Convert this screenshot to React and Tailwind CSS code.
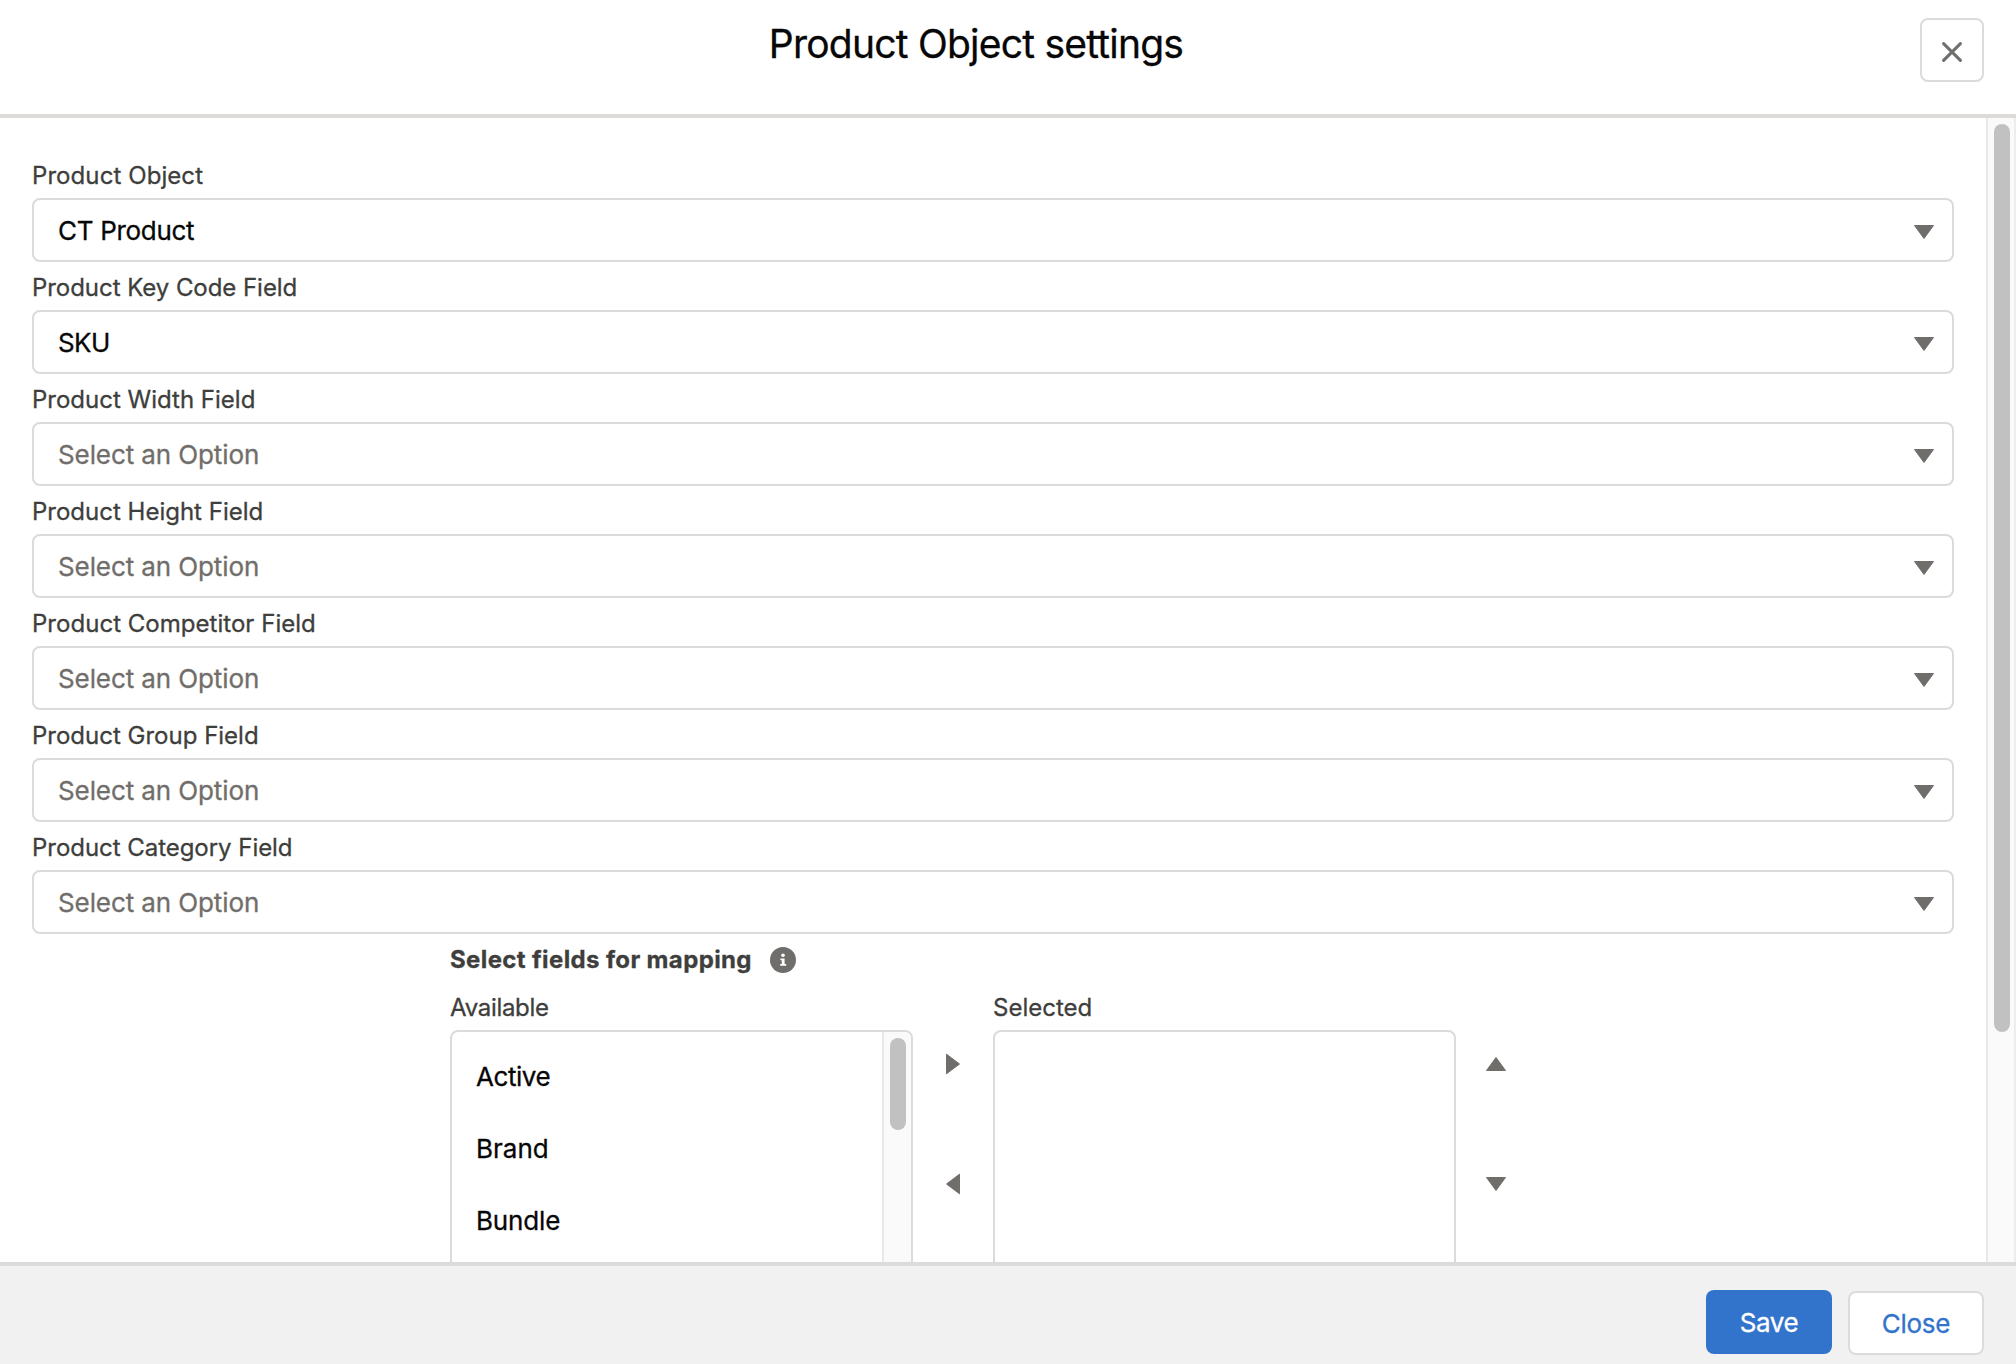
const fields = [
  { label: "Product Object", labelTracking: "tracking-[0.08px]", value: "CT Product", tracking: "tracking-[-0.3px]" },
  { label: "Product Key Code Field", labelTracking: "tracking-[-0.05px]", value: "SKU", tracking: "tracking-[-0.6px]" },
  { label: "Product Width Field", labelTracking: "tracking-[0px]" },
  { label: "Product Height Field", labelTracking: "tracking-[0px]" },
  { label: "Product Competitor Field", labelTracking: "tracking-[0.03px]" },
  { label: "Product Group Field", labelTracking: "tracking-[0px]" },
  { label: "Product Category Field", labelTracking: "tracking-[-0.04px]" },
];

const options = [
  { name: "Active", tracking: "tracking-[-0.45px]" },
  { name: "Brand", tracking: "tracking-[0px]" },
  { name: "Bundle", tracking: "tracking-[-0.15px]" },
];

const arrows = {
  down: { w: 20, h: 14, d: "M0.5 0.5H19.5L10 13.5Z" },
  up: { w: 20, h: 14, d: "M0.5 13.5H19.5L10 0.5Z" },
  right: { w: 14, h: 22, d: "M0.5 1.2V20.8L13.5 11Z" },
  left: { w: 14, h: 22, d: "M13.5 1.2V20.8L0.5 11Z" },
};

function Arrow({ dir }) {
  const a = arrows[dir];
  return (
    <svg width={a.w} height={a.h} viewBox={`0 0 ${a.w} ${a.h}`} className="shrink-0" aria-hidden="true">
      <path d={a.d} fill="#706e6b" stroke="#706e6b" strokeWidth="1" strokeLinejoin="round" />
    </svg>
  );
}

function Picklist({ label, labelTracking, value, tracking }) {
  return (
    <div>
      <div className={`h-12 text-[24px] leading-[52px] text-[#3e3e3c] ${labelTracking}`}>{label}</div>
      <button
        type="button"
        className="flex h-16 w-full items-center justify-between rounded-lg border-2 border-[#dddbda] bg-white pl-6 pr-[18px] text-[26px] leading-[60px]"
      >
        {value ? (
          <span className={`pt-0.5 text-[#080707] ${tracking}`}>{value}</span>
        ) : (
          <span className="pt-0.5 tracking-[-0.1px] text-[#706e6b]">Select an Option</span>
        )}
        <span className="pt-1"><Arrow dir="down" /></span>
      </button>
    </div>
  );
}

function InfoIcon() {
  return (
    <svg width="26" height="26" viewBox="0 0 26 26" aria-hidden="true">
      <circle cx="13" cy="13" r="13" fill="#706e6b" />
      <circle cx="13" cy="8.3" r="1.8" fill="#fff" />
      <path d="M10.4 11.4h4.2v5.6h1.6v1.8h-6V17h1.6v-3.8h-1.4z" fill="#fff" />
    </svg>
  );
}

export default function App() {
  return (
    <div className="flex h-[1364px] w-[2016px] flex-col overflow-hidden bg-white font-['Inter',sans-serif] [-webkit-text-stroke:0.3px]">
      <header className="flex h-[118px] shrink-0 items-start border-b-4 border-[#dddbda] px-8">
        <h1 className="flex-1 text-center text-[39px] font-normal leading-[88px] tracking-[-0.77px] text-[#080707]">
          Product Object settings
        </h1>
        <button
          type="button"
          aria-label="Close"
          className="mt-[18px] flex size-16 items-center justify-center rounded-lg border-2 border-[#dddbda] bg-white pt-1"
        >
          <svg width="20" height="20" viewBox="0 0 20 20" fill="none" stroke="#706e6b" strokeWidth="3" strokeLinecap="round">
            <path d="M1.6 1.6L18.4 18.4M18.4 1.6L1.6 18.4" />
          </svg>
        </button>
      </header>

      <main className="flex h-[1144px] shrink-0 overflow-hidden">
        <div className="flex-1 pl-8 pr-8 pt-8">
          {fields.map((f) => (
            <Picklist key={f.label} {...f} />
          ))}
          <div className="pl-[418px]">
            <div className="flex h-[50px] items-center pt-0.5">
              <span className="w-[320px] text-[24px] font-bold leading-[50px] tracking-[0.37px] text-[#3e3e3c]">
                Select fields for mapping
              </span>
              <InfoIcon />
            </div>
            <div className="flex">
              <div className="w-[463px]">
                <div className="h-[46px] text-[24px] leading-[48px] tracking-[-0.3px] text-[#3e3e3c]">Available</div>
                <div className="flex h-[400px] overflow-hidden rounded-lg border-2 border-[#dddbda] bg-white">
                  <ul className="flex-1 pl-6 pt-[9px] text-[26px] text-[#080707]">
                    {options.map((o) => (
                      <li key={o.name} className={`leading-[72px] ${o.tracking}`}>{o.name}</li>
                    ))}
                  </ul>
                  <div className="flex w-[29px] border-l-2 border-[#e8e8e8] bg-[#fafafa] pl-1.5 pt-1.5">
                    <div className="h-[92px] w-4 rounded-full bg-[#c1c1c1]" />
                  </div>
                </div>
              </div>
              <div className="flex w-20 flex-col items-center gap-[98px] pt-[69px]">
                <Arrow dir="right" />
                <Arrow dir="left" />
              </div>
              <div className="w-[463px]">
                <div className="h-[46px] text-[24px] leading-[48px] tracking-[0px] text-[#3e3e3c]">Selected</div>
                <div className="h-[400px] rounded-lg border-2 border-[#dddbda] bg-white" />
              </div>
              <div className="flex w-20 flex-col items-center gap-[106px] pt-[73px]">
                <Arrow dir="up" />
                <Arrow dir="down" />
              </div>
            </div>
          </div>
        </div>
        <div className="flex w-[30px] shrink-0 justify-center border-x-2 border-l-[#e8e8e8] border-r-[#ededed] bg-[#fafafa] pl-0.5 pt-1.5">
          <div className="h-[908px] w-4 rounded-full bg-[#c1c1c1]" />
        </div>
      </main>

      <footer className="flex h-[102px] shrink-0 items-start justify-end gap-4 border-t-4 border-[#dddbda] bg-[#f1f1f1] pr-8 pt-6 text-[26px]">
        <button type="button" className="h-16 w-[126px] rounded-lg bg-[#3273cb] pt-0.5 leading-[62px] tracking-[-0.4px] text-white">
          Save
        </button>
        <button type="button" className="mt-px h-16 w-[136px] rounded-lg border-2 border-[#dddbda] bg-white pt-0.5 leading-[58px] tracking-[-0.3px] text-[#3273cb]">
          Close
        </button>
      </footer>
    </div>
  );
}
